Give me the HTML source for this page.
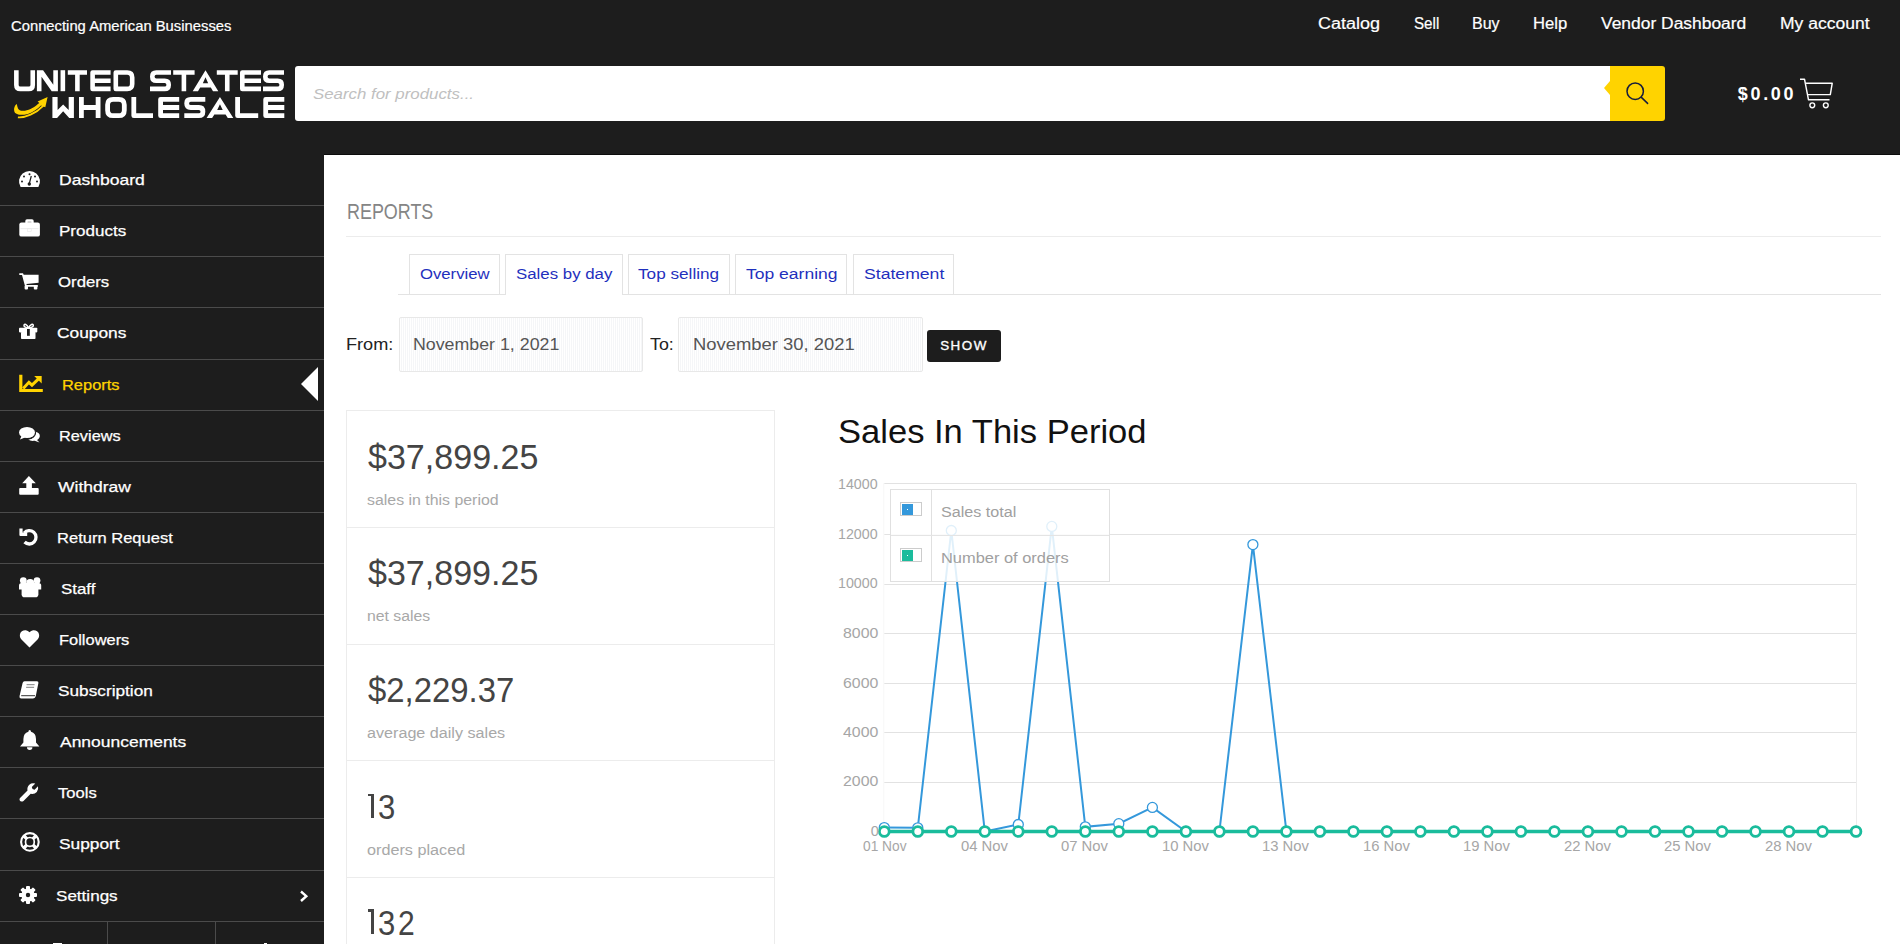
<!DOCTYPE html>
<html><head><meta charset="utf-8"><title>Reports</title>
<style>
html,body{margin:0;padding:0;width:1900px;height:944px;overflow:hidden;background:#fff;position:relative;font-family:"Liberation Sans",sans-serif}
.t{position:absolute;white-space:nowrap;line-height:1}
svg{position:absolute;overflow:visible}
</style></head><body>
<div style="position:absolute;left:0;top:0;width:1900px;height:155px;background:#1d1d1d"></div>
<div style="position:absolute;left:0;top:155px;width:324px;height:789px;background:#1d1d1d"></div>
<div style="position:absolute;left:324px;top:154px;width:1576px;height:1px;background:#0c0c0c"></div>
<div class="t" style="left:11.10px;top:18.50px;font-size:14px;color:#fff;font-weight:400;transform:scaleX(1.0568);transform-origin:0 0;-webkit-text-stroke:0.2px #fff;">Connecting American Businesses</div>
<div class="t" style="left:1318.20px;top:16.00px;font-size:16px;color:#fff;font-weight:400;transform:scaleX(1.1242);transform-origin:0 0;-webkit-text-stroke:0.2px #fff;">Catalog</div>
<div class="t" style="left:1413.70px;top:16.00px;font-size:16px;color:#fff;font-weight:400;transform:scaleX(0.9480);transform-origin:0 0;-webkit-text-stroke:0.2px #fff;">Sell</div>
<div class="t" style="left:1472.40px;top:16.00px;font-size:16px;color:#fff;font-weight:400;transform:scaleX(1.0012);transform-origin:0 0;-webkit-text-stroke:0.2px #fff;">Buy</div>
<div class="t" style="left:1533.40px;top:16.00px;font-size:16px;color:#fff;font-weight:400;transform:scaleX(1.0391);transform-origin:0 0;-webkit-text-stroke:0.2px #fff;">Help</div>
<div class="t" style="left:1601.00px;top:16.00px;font-size:16px;color:#fff;font-weight:400;transform:scaleX(1.0890);transform-origin:0 0;-webkit-text-stroke:0.2px #fff;">Vendor Dashboard</div>
<div class="t" style="left:1780.30px;top:16.00px;font-size:16px;color:#fff;font-weight:400;transform:scaleX(1.0940);transform-origin:0 0;-webkit-text-stroke:0.2px #fff;">My account</div>
<svg style="left:0;top:0" width="300" height="130" viewBox="0 0 300 130"><path d="M16.35,70.2 V84.9 Q16.35,88.9 20.35,88.9 H28.75 Q32.75,88.9 32.75,84.9 V70.2" stroke="#fff" stroke-width="4.6" fill="none" stroke-linejoin="round"/><path d="M36.9,91.2 V70.2 H43.1 L53.3,84.76 V70.2 H57.9 V91.2 H51.699999999999996 L41.5,76.64 V91.2 Z" fill="#fff" fill-rule="evenodd"/><path d="M62.85,70.2 V91.2" stroke="#fff" stroke-width="4.6" fill="none" stroke-linejoin="round"/><path d="M67.8,72.5 H87.0 M77.4,72.5 V91.2" stroke="#fff" stroke-width="4.6" fill="none" stroke-linejoin="round"/><path d="M110.6,72.5 H92.6 V88.9 H110.6 M92.6,80.7 H110.6" stroke="#fff" stroke-width="4.6" fill="none" stroke-linejoin="round"/><path d="M115.8,72.5 H127.19999999999999 Q132.2,72.5 132.2,77.5 V83.9 Q132.2,88.9 127.19999999999999,88.9 H115.8 Z" stroke="#fff" stroke-width="4.6" fill="none" stroke-linejoin="round"/><path d="M171.0,72.5 H156.3 Q152.3,72.5 152.3,76.5 V76.7 Q152.3,80.7 156.3,80.7 H164.7 Q168.7,80.7 168.7,84.7 V84.9 Q168.7,88.9 164.7,88.9 H150.0" stroke="#fff" stroke-width="4.6" fill="none" stroke-linejoin="round"/><path d="M173.2,72.5 H194.6 M183.89999999999998,72.5 V91.2" stroke="#fff" stroke-width="4.6" fill="none" stroke-linejoin="round"/><path d="M205.5,70.2 L218.3,91.2 H192.7 Z M205.5,77.33 L208.14600000000002,83.22 H202.85399999999998 Z M200.19038095238093,87.59 H210.80961904761907 L213.01000000000002,91.2 H197.98999999999998 Z" fill="#fff" fill-rule="evenodd"/><path d="M216.8,72.5 H237.7 M227.25,72.5 V91.2" stroke="#fff" stroke-width="4.6" fill="none" stroke-linejoin="round"/><path d="M261.0,72.5 H242.3 V88.9 H261.0 M242.3,80.7 H261.0" stroke="#fff" stroke-width="4.6" fill="none" stroke-linejoin="round"/><path d="M284.0,72.5 H269.3 Q265.3,72.5 265.3,76.5 V76.7 Q265.3,80.7 269.3,80.7 H277.7 Q281.7,80.7 281.7,84.7 V84.9 Q281.7,88.9 277.7,88.9 H263.0" stroke="#fff" stroke-width="4.6" fill="none" stroke-linejoin="round"/><path d="M52.4,96.9 H57.6 V110.04400000000001 L63.150000000000006,104.53200000000001 L68.7,110.04400000000001 V96.9 H73.9 V118.10000000000001 H69.22 L63.150000000000006,111.316 L57.08,118.10000000000001 H52.4 Z" fill="#fff" fill-rule="evenodd"/><path d="M81.4,96.9 V118.10000000000001 M98.1,96.9 V118.10000000000001 M81.4,107.5 H98.1" stroke="#fff" stroke-width="4.8" fill="none" stroke-linejoin="round"/><path d="M113.10000000000001,99.30000000000001 H118.8 Q124.3,99.30000000000001 124.3,104.80000000000001 V110.2 Q124.3,115.7 118.8,115.7 H113.10000000000001 Q107.60000000000001,115.7 107.60000000000001,110.2 V104.80000000000001 Q107.60000000000001,99.30000000000001 113.10000000000001,99.30000000000001 Z" stroke="#fff" stroke-width="4.8" fill="none" stroke-linejoin="round"/><path d="M133.8,96.9 V115.7 H153.0" stroke="#fff" stroke-width="4.8" fill="none" stroke-linejoin="round"/><path d="M179.2,99.30000000000001 H160.6 V115.7 H179.2 M160.6,107.5 H179.2" stroke="#fff" stroke-width="4.8" fill="none" stroke-linejoin="round"/><path d="M205.3,99.30000000000001 H190.70000000000002 Q186.70000000000002,99.30000000000001 186.70000000000002,103.30000000000001 V103.5 Q186.70000000000002,107.5 190.70000000000002,107.5 H198.9 Q202.9,107.5 202.9,111.5 V111.7 Q202.9,115.7 198.9,115.7 H184.3" stroke="#fff" stroke-width="4.8" fill="none" stroke-linejoin="round"/><path d="M219.95,96.9 L233.3,118.10000000000001 H206.6 Z M219.95,104.34 L222.707,110.04400000000001 H217.19299999999998 Z M214.3214905660377,114.60400000000001 H225.57850943396227 L227.78,118.10000000000001 H212.11999999999998 Z" fill="#fff" fill-rule="evenodd"/><path d="M237.6,96.9 V115.7 H258.2" stroke="#fff" stroke-width="4.8" fill="none" stroke-linejoin="round"/><path d="M284.3,99.30000000000001 H265.7 V115.7 H284.3 M265.7,107.5 H284.3" stroke="#fff" stroke-width="4.8" fill="none" stroke-linejoin="round"/></svg>
<svg style="left:10px;top:92px;" width="45" height="30" viewBox="0 0 45 30"><path d="M6.8,12 C4,13.5 2.8,19.5 6,21.6 C8.5,23.3 13,23 17.8,21.9 C23,20.5 27,17 31,13.4 L35.3,15.2 L37.6,5.1 L27.6,9.4 L29.3,11.1 C25,14.8 20,18.3 14.9,18.7 C11,19 9,18.5 8,16.5 C7.3,15 7.2,13.5 6.8,12 Z" fill="#ffd300"/><path d="M7.9,25.3 C15,26 26,21.5 33.4,13.6" stroke="#ffd300" stroke-width="1.8" fill="none"/></svg>
<div style="position:absolute;left:295px;top:66px;width:1320px;height:55px;background:#fff;border-radius:3px 0 0 3px"></div>
<div class="t" style="left:313.20px;top:86.25px;font-size:15.5px;color:#c0c0c0;font-weight:400;transform:scaleX(1.0865);transform-origin:0 0;font-style:italic;">Search for products...</div>
<div style="position:absolute;left:1610px;top:66px;width:55px;height:55px;background:#ffd300;border-radius:0 3px 3px 0"></div>
<div style="position:absolute;left:1603.8px;top:81px;width:0;height:0;border-top:7px solid transparent;border-bottom:7px solid transparent;border-right:6.4px solid #ffd300"></div>
<svg style="left:1620px;top:76px;" width="32" height="32" viewBox="0 0 32 32"><circle cx="15.2" cy="15.2" r="8.2" stroke="#161c3c" stroke-width="1.5" fill="none"/><path d="M21.4,21.4 L27.6,27.4" stroke="#161c3c" stroke-width="1.5" stroke-linecap="round"/></svg>
<div class="t" style="left:1737.80px;top:84.50px;font-size:18px;color:#fff;font-weight:700;letter-spacing:2.666px;">$0.00</div>
<svg style="left:1799px;top:77.6px;" width="36" height="33" viewBox="0 0 36 33"><path d="M1,1.2 L5.5,1.2 L9.5,21.8 L30.5,21.8" stroke="#fff" stroke-width="1.45" fill="none" stroke-linejoin="round"/><path d="M6.3,5.3 L33.2,5.3 L31.3,16.6 L8.3,16.6" stroke="#fff" stroke-width="1.45" fill="none" stroke-linejoin="round"/><circle cx="13.3" cy="27.3" r="2.4" stroke="#fff" stroke-width="1.4" fill="none"/><circle cx="26.8" cy="27.3" r="2.4" stroke="#fff" stroke-width="1.4" fill="none"/></svg>
<div style="position:absolute;left:0;top:205px;width:324px;height:1px;background:#4b4b4b"></div>
<div style="position:absolute;left:0;top:256px;width:324px;height:1px;background:#4b4b4b"></div>
<div style="position:absolute;left:0;top:307px;width:324px;height:1px;background:#4b4b4b"></div>
<div style="position:absolute;left:0;top:359px;width:324px;height:1px;background:#4b4b4b"></div>
<div style="position:absolute;left:0;top:410px;width:324px;height:1px;background:#4b4b4b"></div>
<div style="position:absolute;left:0;top:461px;width:324px;height:1px;background:#4b4b4b"></div>
<div style="position:absolute;left:0;top:512px;width:324px;height:1px;background:#4b4b4b"></div>
<div style="position:absolute;left:0;top:563px;width:324px;height:1px;background:#4b4b4b"></div>
<div style="position:absolute;left:0;top:614px;width:324px;height:1px;background:#4b4b4b"></div>
<div style="position:absolute;left:0;top:665px;width:324px;height:1px;background:#4b4b4b"></div>
<div style="position:absolute;left:0;top:716px;width:324px;height:1px;background:#4b4b4b"></div>
<div style="position:absolute;left:0;top:767px;width:324px;height:1px;background:#4b4b4b"></div>
<div style="position:absolute;left:0;top:818px;width:324px;height:1px;background:#4b4b4b"></div>
<div style="position:absolute;left:0;top:870px;width:324px;height:1px;background:#4b4b4b"></div>
<div style="position:absolute;left:0;top:921px;width:324px;height:1px;background:#4b4b4b"></div>
<div style="position:absolute;left:107px;top:922px;width:1px;height:22px;background:#4b4b4b"></div>
<div style="position:absolute;left:215px;top:922px;width:1px;height:22px;background:#4b4b4b"></div>
<div class="t" style="left:59.00px;top:172.40px;font-size:15.2px;color:#fff;font-weight:400;transform:scaleX(1.1552);transform-origin:0 0;-webkit-text-stroke:0.25px #fff;">Dashboard</div>
<div class="t" style="left:59.00px;top:223.40px;font-size:15.2px;color:#fff;font-weight:400;transform:scaleX(1.1221);transform-origin:0 0;-webkit-text-stroke:0.25px #fff;">Products</div>
<div class="t" style="left:58.00px;top:274.40px;font-size:15.2px;color:#fff;font-weight:400;transform:scaleX(1.1044);transform-origin:0 0;-webkit-text-stroke:0.25px #fff;">Orders</div>
<div class="t" style="left:56.80px;top:325.40px;font-size:15.2px;color:#fff;font-weight:400;transform:scaleX(1.1422);transform-origin:0 0;-webkit-text-stroke:0.25px #fff;">Coupons</div>
<div class="t" style="left:62.40px;top:377.40px;font-size:15.2px;color:#ffd300;font-weight:400;transform:scaleX(1.0824);transform-origin:0 0;-webkit-text-stroke:0.25px #ffd300;">Reports</div>
<div class="t" style="left:59.00px;top:428.40px;font-size:15.2px;color:#fff;font-weight:400;transform:scaleX(1.0741);transform-origin:0 0;-webkit-text-stroke:0.25px #fff;">Reviews</div>
<div class="t" style="left:58.30px;top:479.40px;font-size:15.2px;color:#fff;font-weight:400;transform:scaleX(1.1533);transform-origin:0 0;-webkit-text-stroke:0.25px #fff;">Withdraw</div>
<div class="t" style="left:56.80px;top:530.40px;font-size:15.2px;color:#fff;font-weight:400;transform:scaleX(1.0887);transform-origin:0 0;-webkit-text-stroke:0.25px #fff;">Return Request</div>
<div class="t" style="left:60.80px;top:581.40px;font-size:15.2px;color:#fff;font-weight:400;transform:scaleX(1.1121);transform-origin:0 0;-webkit-text-stroke:0.25px #fff;">Staff</div>
<div class="t" style="left:59.30px;top:632.40px;font-size:15.2px;color:#fff;font-weight:400;transform:scaleX(1.0824);transform-origin:0 0;-webkit-text-stroke:0.25px #fff;">Followers</div>
<div class="t" style="left:58.30px;top:683.40px;font-size:15.2px;color:#fff;font-weight:400;transform:scaleX(1.1345);transform-origin:0 0;-webkit-text-stroke:0.25px #fff;">Subscription</div>
<div class="t" style="left:59.70px;top:734.40px;font-size:15.2px;color:#fff;font-weight:400;transform:scaleX(1.1497);transform-origin:0 0;-webkit-text-stroke:0.25px #fff;">Announcements</div>
<div class="t" style="left:58.30px;top:785.40px;font-size:15.2px;color:#fff;font-weight:400;transform:scaleX(1.0909);transform-origin:0 0;-webkit-text-stroke:0.25px #fff;">Tools</div>
<div class="t" style="left:59.30px;top:836.40px;font-size:15.2px;color:#fff;font-weight:400;transform:scaleX(1.1403);transform-origin:0 0;-webkit-text-stroke:0.25px #fff;">Support</div>
<div class="t" style="left:56.40px;top:888.40px;font-size:15.2px;color:#fff;font-weight:400;transform:scaleX(1.1235);transform-origin:0 0;-webkit-text-stroke:0.25px #fff;">Settings</div>
<svg style="left:18.5px;top:171px;" width="21" height="16" viewBox="0 0 21 16"><path d="M1.6,16 A10.5,10.5 0 1 1 19.4,16 Z" fill="#fff"/><circle cx="10.5" cy="3.2" r="1" fill="#1d1d1d"/><circle cx="5" cy="5.5" r="1" fill="#1d1d1d"/><circle cx="16" cy="5.5" r="1" fill="#1d1d1d"/><circle cx="3" cy="10.5" r="1" fill="#1d1d1d"/><circle cx="18" cy="10.5" r="1" fill="#1d1d1d"/><path d="M10.3,12.5 L12.3,5" stroke="#1d1d1d" stroke-width="1.2"/><circle cx="10.3" cy="13" r="1.7" fill="#1d1d1d"/></svg>
<svg style="left:18.5px;top:219px;" width="21" height="18" viewBox="0 0 21 18"><path d="M6.3,5 V2 Q6.3,0.3 8,0.3 H13 Q14.7,0.3 14.7,2 V5 Z" fill="#fff"/><rect x="0.3" y="3.4" width="20.6" height="14.2" rx="2.2" fill="#fff"/><rect x="8.5" y="2.2" width="4" height="1.6" rx="0.5" fill="#ccc"/><rect x="1.5" y="9.5" width="18" height="0.6" fill="#ddd"/><rect x="8.6" y="9.8" width="3.6" height="2.6" fill="none" stroke="#e4e4e4" stroke-width="0.5"/></svg>
<svg style="left:18.5px;top:272.5px;" width="20" height="17" viewBox="0 0 20 17"><path d="M0.3,0.2 H4 L4.7,1.7 H19.6 V9.7 L7.4,10.9 L7.7,12.1 H18.8 V13.8 H6.2 L3,2.1 H0.3 Z" fill="#fff"/><rect x="5.6" y="12.6" width="3.4" height="3.9" rx="1" fill="#fff"/><rect x="14.8" y="12.6" width="3.6" height="3.9" rx="1" fill="#fff"/></svg>
<svg style="left:18.5px;top:323px;" width="19" height="16" viewBox="0 0 19 16"><path d="M9.6,5 C8,1 5,0.3 5,2.6 C5,4.2 7.5,4.8 9.6,5 C11.7,4.8 14.3,4.2 14.3,2.6 C14.3,0.3 11.2,1 9.6,5 Z" stroke="#fff" stroke-width="1.5" fill="none"/><rect x="0" y="4.8" width="18.3" height="4.6" rx="0.8" fill="#fff"/><rect x="2" y="9" width="14.5" height="7" rx="0.8" fill="#fff"/><rect x="8" y="6" width="2.8" height="6.8" fill="#1d1d1d"/></svg>
<svg style="left:18.5px;top:375px;" width="24" height="18" viewBox="0 0 24 18"><path d="M0.2,-0.2 H3.4 V14 H23.8 V17.1 H0.2 Z" fill="#ffd300"/><path d="M4.2,13.4 L9.9,7.3 L13,10.2 L19.8,3.6" stroke="#ffd300" stroke-width="3" fill="none" stroke-linejoin="miter"/><path d="M15.2,0.9 H22.7 V8.4 Z" fill="#ffd300"/></svg>
<svg style="left:18.5px;top:427px;" width="21" height="16" viewBox="0 0 21 16"><ellipse cx="8" cy="5.5" rx="8" ry="5.5" fill="#fff"/><path d="M2.5,9 L1,12.5 L6,10.5 Z" fill="#fff"/><path d="M9,12.5 A7,4.8 0 0 0 20.8,9.5 A6,4.5 0 0 0 16.5,4.8 A8.5,6.5 0 0 1 9,12.5 Z" fill="#fff"/><path d="M17.5,12.5 L20.5,15.5 L15,13.5 Z" fill="#fff"/><path d="M8.8,12.2 A8.6,6.3 0 0 0 16.6,5" stroke="#1d1d1d" stroke-width="1" fill="none"/></svg>
<svg style="left:18.5px;top:475.5px;" width="20" height="19" viewBox="0 0 20 19"><path d="M9.9,0 L16.8,7.2 H12.9 V12.5 H7.3 V7.2 H3.2 Z" fill="#fff"/><rect x="0.2" y="11.9" width="19.5" height="6.8" rx="1" fill="#fff"/></svg>
<svg style="left:18.5px;top:527.5px;" width="19" height="18" viewBox="0 0 19 18"><path d="M5.17,4.99 A6.7,6.7 0 1 1 5.56,14.04" stroke="#fff" stroke-width="3.3" fill="none"/><path d="M0.4,0.6 H3.6 V4.6 H8.2 V8 H1.4 Q0.4,8 0.4,7 Z" fill="#fff"/></svg>
<svg style="left:18.5px;top:576.8px;" width="23" height="21" viewBox="0 0 23 21"><circle cx="4.3" cy="3.6" r="3.4" fill="#fff"/><circle cx="18" cy="3.6" r="3.4" fill="#fff"/><circle cx="11.2" cy="6" r="4" fill="#fff"/><path d="M0,8.5 Q0,6 2.5,6 H19.7 Q22.2,6 22.2,8.5 V12.5 H0 Z" fill="#fff"/><path d="M2.6,11 H19.4 V17.2 Q19.4,20.3 16.3,20.3 H5.7 Q2.6,20.3 2.6,17.2 Z" fill="#fff"/></svg>
<svg style="left:18.5px;top:629.5px;" width="21" height="18" viewBox="0 0 21 18"><path d="M10.5,17.5 L2,9 A5.3,5.3 0 0 1 10.5,2.2 A5.3,5.3 0 0 1 19,9 Z" fill="#fff"/></svg>
<svg style="left:18.5px;top:680.5px;" width="20" height="18" viewBox="0 0 20 18"><path d="M5.5,0.3 H18 Q19.7,0.3 19.4,1.9 L16.9,14.6 Q16.4,17.5 13.8,17.5 H2.2 Q0.2,17.5 0.5,15.3 L3.6,2 Q4,0.3 5.5,0.3 Z" fill="#fff"/><path d="M2.2,14.7 H16" stroke="#1d1d1d" stroke-width="0.9"/><path d="M7.6,3.7 H15.6 M7.1,6.3 H15.1" stroke="#1d1d1d" stroke-width="0.8" opacity="0.7"/></svg>
<svg style="left:19.5px;top:730px;" width="20" height="20" viewBox="0 0 20 20"><path d="M9.7,0 Q11,0 11,1.7 Q16,3 16,9 V12.5 L19.4,16.5 H0 L3.4,12.5 V9 Q3.4,3 8.4,1.7 Q8.4,0 9.7,0 Z" fill="#fff"/><path d="M7,17.2 H12.4 A2.7,2.7 0 0 1 7,17.2 Z" fill="#fff"/></svg>
<svg style="left:19px;top:782.5px;" width="19.5" height="19" viewBox="0 0 19.5 19"><path d="M2.5,18.5 Q0.5,18.5 0.5,16.5 Q0.5,15.6 1.3,14.8 L8.5,7.6 Q7.8,4 10.3,1.7 Q12.8,-0.4 16.3,0.6 L12.8,4 L13.5,6 L15.5,6.7 L19,3.3 Q19.8,6.6 17.8,9 Q15.4,11.5 11.7,10.8 L4.5,18 Q3.6,18.5 2.5,18.5 Z" fill="#fff"/></svg>
<svg style="left:19.5px;top:832px;" width="20" height="20" viewBox="0 0 20 20"><circle cx="9.9" cy="9.9" r="8.8" stroke="#fff" stroke-width="2.1" fill="none"/><circle cx="9.9" cy="9.9" r="4.4" stroke="#fff" stroke-width="1.7" fill="none"/><path d="M3.8,3.8 L6.9,6.9 M16,3.8 L12.9,6.9 M3.8,16 L6.9,12.9 M16,16 L12.9,12.9" stroke="#fff" stroke-width="3.4"/></svg>
<svg style="left:18.8px;top:885.5px;" width="18" height="18" viewBox="0 0 18 18"><rect x="7" y="0" width="4" height="18" rx="1" fill="#fff" transform="rotate(0 9 9)"/><rect x="7" y="0" width="4" height="18" rx="1" fill="#fff" transform="rotate(45 9 9)"/><rect x="7" y="0" width="4" height="18" rx="1" fill="#fff" transform="rotate(90 9 9)"/><rect x="7" y="0" width="4" height="18" rx="1" fill="#fff" transform="rotate(135 9 9)"/><circle cx="9" cy="9" r="6.6" fill="#fff"/><circle cx="9" cy="9" r="2.2" fill="#1d1d1d"/></svg>
<svg style="left:298.5px;top:890px;" width="10" height="12.5" viewBox="0 0 10 12.5"><path d="M2,1.5 L7.3,6.2 L2,11" stroke="#fff" stroke-width="2.4" fill="none"/></svg>
<div style="position:absolute;left:300.7px;top:366.7px;width:0;height:0;border-top:17.6px solid transparent;border-bottom:17.6px solid transparent;border-right:17.6px solid #fff"></div>
<div style="position:absolute;left:53px;top:942.5px;width:8.5px;height:1.5px;background:#fff"></div>
<div style="position:absolute;left:264px;top:942.5px;width:2.5px;height:1.5px;background:#fff"></div>
<div class="t" style="left:346.60px;top:200.75px;font-size:22.5px;color:#858585;font-weight:400;transform:scaleX(0.7964);transform-origin:0 0;">REPORTS</div>
<div style="position:absolute;left:346px;top:236px;width:1535px;height:1px;background:#ececec"></div>
<div style="position:absolute;left:398px;top:294px;width:1483px;height:1px;background:#e3e3e3"></div>
<div style="position:absolute;left:408.8px;top:254px;width:91.2px;height:40px;border:1px solid #e3e3e3;border-bottom:none;background:#fff;box-sizing:border-box"></div>
<div class="t" style="left:420.00px;top:266.25px;font-size:15.5px;color:#1f30bd;font-weight:400;transform:scaleX(1.0768);transform-origin:0 0;">Overview</div>
<div style="position:absolute;left:504.9px;top:254px;width:118.2px;height:41px;border:1px solid #e3e3e3;border-bottom:none;background:#fff;box-sizing:border-box"></div>
<div class="t" style="left:515.70px;top:266.25px;font-size:15.5px;color:#1f30bd;font-weight:400;transform:scaleX(1.0862);transform-origin:0 0;">Sales by day</div>
<div style="position:absolute;left:627.8px;top:254px;width:102.3px;height:40px;border:1px solid #e3e3e3;border-bottom:none;background:#fff;box-sizing:border-box"></div>
<div class="t" style="left:638.40px;top:266.25px;font-size:15.5px;color:#1f30bd;font-weight:400;transform:scaleX(1.1074);transform-origin:0 0;">Top selling</div>
<div style="position:absolute;left:735.0px;top:254px;width:112.1px;height:40px;border:1px solid #e3e3e3;border-bottom:none;background:#fff;box-sizing:border-box"></div>
<div class="t" style="left:745.80px;top:266.25px;font-size:15.5px;color:#1f30bd;font-weight:400;transform:scaleX(1.1296);transform-origin:0 0;">Top earning</div>
<div style="position:absolute;left:852.9px;top:254px;width:101.4px;height:40px;border:1px solid #e3e3e3;border-bottom:none;background:#fff;box-sizing:border-box"></div>
<div class="t" style="left:863.50px;top:266.25px;font-size:15.5px;color:#1f30bd;font-weight:400;transform:scaleX(1.1366);transform-origin:0 0;">Statement</div>
<div class="t" style="left:346.30px;top:335.90px;font-size:17.2px;color:#222;font-weight:400;transform:scaleX(1.0555);transform-origin:0 0;">From:</div>
<div style="position:absolute;left:399px;top:317px;width:244px;height:55px;background:repeating-linear-gradient(90deg,#fff 0 1px,#f5f6f8 1px 2px);border:1px solid #e8e8e8;box-sizing:border-box;border-radius:2px"></div>
<div class="t" style="left:413.40px;top:335.90px;font-size:17.2px;color:#555;font-weight:400;transform:scaleX(1.0346);transform-origin:0 0;">November 1, 2021</div>
<div class="t" style="left:649.70px;top:335.90px;font-size:17.2px;color:#222;font-weight:400;transform:scaleX(1.0373);transform-origin:0 0;">To:</div>
<div style="position:absolute;left:678px;top:317px;width:245px;height:55px;background:repeating-linear-gradient(90deg,#fff 0 1px,#f5f6f8 1px 2px);border:1px solid #e8e8e8;box-sizing:border-box;border-radius:2px"></div>
<div class="t" style="left:693.00px;top:335.90px;font-size:17.2px;color:#555;font-weight:400;transform:scaleX(1.0710);transform-origin:0 0;">November 30, 2021</div>
<div style="position:absolute;left:927px;top:330px;width:74px;height:32px;background:#1d1d1d;border-radius:3px"></div>
<div class="t" style="left:940.20px;top:339.30px;font-size:13.4px;color:#fff;font-weight:400;letter-spacing:1.504px;-webkit-text-stroke:0.35px #fff;">SHOW</div>
<div style="position:absolute;left:346px;top:410px;width:429px;height:600px;border:1px solid #ececec;box-sizing:border-box"></div>
<div style="position:absolute;left:346px;top:527px;width:429px;height:1px;background:#ececec"></div>
<div style="position:absolute;left:346px;top:644px;width:429px;height:1px;background:#ececec"></div>
<div style="position:absolute;left:346px;top:760px;width:429px;height:1px;background:#ececec"></div>
<div style="position:absolute;left:346px;top:877px;width:429px;height:1px;background:#ececec"></div>
<div class="t" style="left:368.00px;top:438.50px;font-size:35px;color:#444;font-weight:400;transform:scaleX(0.9727);transform-origin:0 0;">$37,899.25</div>
<div class="t" style="left:366.80px;top:492.25px;font-size:15.5px;color:#a8a8a8;font-weight:400;transform:scaleX(1.0252);transform-origin:0 0;">sales in this period</div>
<div class="t" style="left:368.00px;top:554.50px;font-size:35px;color:#444;font-weight:400;transform:scaleX(0.9722);transform-origin:0 0;">$37,899.25</div>
<div class="t" style="left:366.80px;top:608.25px;font-size:15.5px;color:#a8a8a8;font-weight:400;transform:scaleX(1.0188);transform-origin:0 0;">net sales</div>
<div class="t" style="left:368.00px;top:671.50px;font-size:35px;color:#444;font-weight:400;transform:scaleX(0.9395);transform-origin:0 0;">$2,229.37</div>
<div class="t" style="left:366.80px;top:725.25px;font-size:15.5px;color:#a8a8a8;font-weight:400;transform:scaleX(1.0415);transform-origin:0 0;">average daily sales</div>
<div style="position:absolute;left:371.4px;top:793.6px;width:2.7px;height:24.4px;background:#444"></div>
<div style="position:absolute;left:367.6px;top:793.6px;width:5px;height:2.6px;background:#444"></div>
<div class="t" style="left:378.00px;top:788.50px;font-size:35px;color:#444;font-weight:400;transform:scaleX(0.8890);transform-origin:0 0;">3</div>
<div class="t" style="left:367.00px;top:842.25px;font-size:15.5px;color:#a8a8a8;font-weight:400;transform:scaleX(1.0456);transform-origin:0 0;">orders placed</div>
<div style="position:absolute;left:371.4px;top:909.2px;width:2.7px;height:24.4px;background:#444"></div>
<div style="position:absolute;left:367.6px;top:909.2px;width:5px;height:2.6px;background:#444"></div>
<div class="t" style="left:378.00px;top:904.50px;font-size:35px;color:#444;font-weight:400;transform:scaleX(0.8890);transform-origin:0 0;">3</div>
<div class="t" style="left:397.50px;top:904.50px;font-size:35px;color:#444;font-weight:400;transform:scaleX(0.8582);transform-origin:0 0;">2</div>
<div class="t" style="left:838.30px;top:415.25px;font-size:33.5px;color:#111;font-weight:400;transform:scaleX(1.0311);transform-origin:0 0;">Sales In This Period</div>
<svg style="left:0;top:0" width="1900" height="944" viewBox="0 0 1900 944"><path d="M884.3,831.5 H1856.0" stroke="#e2e2e2" stroke-width="1"/><path d="M884.3,782.5 H1856.0" stroke="#e2e2e2" stroke-width="1"/><path d="M884.3,732.5 H1856.0" stroke="#e2e2e2" stroke-width="1"/><path d="M884.3,683.5 H1856.0" stroke="#e2e2e2" stroke-width="1"/><path d="M884.3,633.5 H1856.0" stroke="#e2e2e2" stroke-width="1"/><path d="M884.3,584.5 H1856.0" stroke="#e2e2e2" stroke-width="1"/><path d="M884.3,534.5 H1856.0" stroke="#e2e2e2" stroke-width="1"/><path d="M884.3,483.5 H1856.0" stroke="#e2e2e2" stroke-width="1"/><path d="M1856.5,483.5 V831.5" stroke="#ececec" stroke-width="1"/><path d="M883.8,483.5 V831.5" stroke="#eeeeee" stroke-width="1" stroke-dasharray="1 1"/><path d="M884.3,827.6 L917.8,827.8 L951.3,530.5 L984.8,831.5 L1018.3,824.5 L1051.8,526.4 L1085.3,826.8 L1118.8,823.7 L1152.4,807.4 L1185.9,831.5 L1219.4,831.5 L1252.9,544.6 L1286.4,831.5 L1319.9,831.5 L1353.4,831.5 L1386.9,831.5 L1420.4,831.5 L1453.9,831.5 L1487.4,831.5 L1520.9,831.5 L1554.4,831.5 L1587.9,831.5 L1621.5,831.5 L1655.0,831.5 L1688.5,831.5 L1722.0,831.5 L1755.5,831.5 L1789.0,831.5 L1822.5,831.5 L1856.0,831.5" stroke="#3498db" stroke-width="2" fill="none" stroke-linejoin="miter"/><circle cx="884.3" cy="827.6" r="5" stroke="#3498db" stroke-width="1.3" fill="#fff"/><circle cx="917.8" cy="827.8" r="5" stroke="#3498db" stroke-width="1.3" fill="#fff"/><circle cx="951.3" cy="530.5" r="5" stroke="#3498db" stroke-width="1.3" fill="#fff"/><circle cx="984.8" cy="831.5" r="5" stroke="#3498db" stroke-width="1.3" fill="#fff"/><circle cx="1018.3" cy="824.5" r="5" stroke="#3498db" stroke-width="1.3" fill="#fff"/><circle cx="1051.8" cy="526.4" r="5" stroke="#3498db" stroke-width="1.3" fill="#fff"/><circle cx="1085.3" cy="826.8" r="5" stroke="#3498db" stroke-width="1.3" fill="#fff"/><circle cx="1118.8" cy="823.7" r="5" stroke="#3498db" stroke-width="1.3" fill="#fff"/><circle cx="1152.4" cy="807.4" r="5" stroke="#3498db" stroke-width="1.3" fill="#fff"/><circle cx="1185.9" cy="831.5" r="5" stroke="#3498db" stroke-width="1.3" fill="#fff"/><circle cx="1219.4" cy="831.5" r="5" stroke="#3498db" stroke-width="1.3" fill="#fff"/><circle cx="1252.9" cy="544.6" r="5" stroke="#3498db" stroke-width="1.3" fill="#fff"/><circle cx="1286.4" cy="831.5" r="5" stroke="#3498db" stroke-width="1.3" fill="#fff"/><circle cx="1319.9" cy="831.5" r="5" stroke="#3498db" stroke-width="1.3" fill="#fff"/><circle cx="1353.4" cy="831.5" r="5" stroke="#3498db" stroke-width="1.3" fill="#fff"/><circle cx="1386.9" cy="831.5" r="5" stroke="#3498db" stroke-width="1.3" fill="#fff"/><circle cx="1420.4" cy="831.5" r="5" stroke="#3498db" stroke-width="1.3" fill="#fff"/><circle cx="1453.9" cy="831.5" r="5" stroke="#3498db" stroke-width="1.3" fill="#fff"/><circle cx="1487.4" cy="831.5" r="5" stroke="#3498db" stroke-width="1.3" fill="#fff"/><circle cx="1520.9" cy="831.5" r="5" stroke="#3498db" stroke-width="1.3" fill="#fff"/><circle cx="1554.4" cy="831.5" r="5" stroke="#3498db" stroke-width="1.3" fill="#fff"/><circle cx="1587.9" cy="831.5" r="5" stroke="#3498db" stroke-width="1.3" fill="#fff"/><circle cx="1621.5" cy="831.5" r="5" stroke="#3498db" stroke-width="1.3" fill="#fff"/><circle cx="1655.0" cy="831.5" r="5" stroke="#3498db" stroke-width="1.3" fill="#fff"/><circle cx="1688.5" cy="831.5" r="5" stroke="#3498db" stroke-width="1.3" fill="#fff"/><circle cx="1722.0" cy="831.5" r="5" stroke="#3498db" stroke-width="1.3" fill="#fff"/><circle cx="1755.5" cy="831.5" r="5" stroke="#3498db" stroke-width="1.3" fill="#fff"/><circle cx="1789.0" cy="831.5" r="5" stroke="#3498db" stroke-width="1.3" fill="#fff"/><circle cx="1822.5" cy="831.5" r="5" stroke="#3498db" stroke-width="1.3" fill="#fff"/><circle cx="1856.0" cy="831.5" r="5" stroke="#3498db" stroke-width="1.3" fill="#fff"/><path d="M884.3,831.5 H1856.0" stroke="#1abc9c" stroke-width="3.3"/><circle cx="884.3" cy="831.5" r="4.9" stroke="#1abc9c" stroke-width="2.8" fill="#fff"/><circle cx="917.8" cy="831.5" r="4.9" stroke="#1abc9c" stroke-width="2.8" fill="#fff"/><circle cx="951.3" cy="831.5" r="4.9" stroke="#1abc9c" stroke-width="2.8" fill="#fff"/><circle cx="984.8" cy="831.5" r="4.9" stroke="#1abc9c" stroke-width="2.8" fill="#fff"/><circle cx="1018.3" cy="831.5" r="4.9" stroke="#1abc9c" stroke-width="2.8" fill="#fff"/><circle cx="1051.8" cy="831.5" r="4.9" stroke="#1abc9c" stroke-width="2.8" fill="#fff"/><circle cx="1085.3" cy="831.5" r="4.9" stroke="#1abc9c" stroke-width="2.8" fill="#fff"/><circle cx="1118.8" cy="831.5" r="4.9" stroke="#1abc9c" stroke-width="2.8" fill="#fff"/><circle cx="1152.4" cy="831.5" r="4.9" stroke="#1abc9c" stroke-width="2.8" fill="#fff"/><circle cx="1185.9" cy="831.5" r="4.9" stroke="#1abc9c" stroke-width="2.8" fill="#fff"/><circle cx="1219.4" cy="831.5" r="4.9" stroke="#1abc9c" stroke-width="2.8" fill="#fff"/><circle cx="1252.9" cy="831.5" r="4.9" stroke="#1abc9c" stroke-width="2.8" fill="#fff"/><circle cx="1286.4" cy="831.5" r="4.9" stroke="#1abc9c" stroke-width="2.8" fill="#fff"/><circle cx="1319.9" cy="831.5" r="4.9" stroke="#1abc9c" stroke-width="2.8" fill="#fff"/><circle cx="1353.4" cy="831.5" r="4.9" stroke="#1abc9c" stroke-width="2.8" fill="#fff"/><circle cx="1386.9" cy="831.5" r="4.9" stroke="#1abc9c" stroke-width="2.8" fill="#fff"/><circle cx="1420.4" cy="831.5" r="4.9" stroke="#1abc9c" stroke-width="2.8" fill="#fff"/><circle cx="1453.9" cy="831.5" r="4.9" stroke="#1abc9c" stroke-width="2.8" fill="#fff"/><circle cx="1487.4" cy="831.5" r="4.9" stroke="#1abc9c" stroke-width="2.8" fill="#fff"/><circle cx="1520.9" cy="831.5" r="4.9" stroke="#1abc9c" stroke-width="2.8" fill="#fff"/><circle cx="1554.4" cy="831.5" r="4.9" stroke="#1abc9c" stroke-width="2.8" fill="#fff"/><circle cx="1587.9" cy="831.5" r="4.9" stroke="#1abc9c" stroke-width="2.8" fill="#fff"/><circle cx="1621.5" cy="831.5" r="4.9" stroke="#1abc9c" stroke-width="2.8" fill="#fff"/><circle cx="1655.0" cy="831.5" r="4.9" stroke="#1abc9c" stroke-width="2.8" fill="#fff"/><circle cx="1688.5" cy="831.5" r="4.9" stroke="#1abc9c" stroke-width="2.8" fill="#fff"/><circle cx="1722.0" cy="831.5" r="4.9" stroke="#1abc9c" stroke-width="2.8" fill="#fff"/><circle cx="1755.5" cy="831.5" r="4.9" stroke="#1abc9c" stroke-width="2.8" fill="#fff"/><circle cx="1789.0" cy="831.5" r="4.9" stroke="#1abc9c" stroke-width="2.8" fill="#fff"/><circle cx="1822.5" cy="831.5" r="4.9" stroke="#1abc9c" stroke-width="2.8" fill="#fff"/><circle cx="1856.0" cy="831.5" r="4.9" stroke="#1abc9c" stroke-width="2.8" fill="#fff"/></svg><div style="position:absolute;left:890px;top:489px;width:220px;height:93px;background:rgba(255,255,255,0.85);border:1px solid #e0e0e0;box-sizing:border-box"></div><div style="position:absolute;left:931px;top:490px;width:1px;height:91px;background:#e0e0e0"></div><div style="position:absolute;left:891px;top:535px;width:218px;height:1px;background:#e4e4e4"></div><div style="position:absolute;left:900px;top:502.4px;width:22px;height:14px;border:1px solid #ccc;box-sizing:border-box"></div><div style="position:absolute;left:902px;top:504.0px;width:11px;height:11px;background:#3498db"></div><div style="position:absolute;left:907px;top:509.0px;width:1px;height:1px;background:#fff"></div><div style="position:absolute;left:900px;top:548.4px;width:22px;height:14px;border:1px solid #ccc;box-sizing:border-box"></div><div style="position:absolute;left:902px;top:550.0px;width:11px;height:11px;background:#1abc9c"></div><div style="position:absolute;left:907px;top:555.0px;width:1px;height:1px;background:#fff"></div>
<div class="t" style="left:870.70px;top:824.25px;font-size:14.5px;color:#a6a6a6;font-weight:400;">0</div>
<div class="t" style="left:842.60px;top:774.25px;font-size:14.5px;color:#a6a6a6;font-weight:400;transform:scaleX(1.0941);transform-origin:0 0;">2000</div>
<div class="t" style="left:842.60px;top:725.25px;font-size:14.5px;color:#a6a6a6;font-weight:400;transform:scaleX(1.0941);transform-origin:0 0;">4000</div>
<div class="t" style="left:842.60px;top:676.25px;font-size:14.5px;color:#a6a6a6;font-weight:400;transform:scaleX(1.0941);transform-origin:0 0;">6000</div>
<div class="t" style="left:842.60px;top:626.25px;font-size:14.5px;color:#a6a6a6;font-weight:400;transform:scaleX(1.0941);transform-origin:0 0;">8000</div>
<div class="t" style="left:838.30px;top:576.25px;font-size:14.5px;color:#a6a6a6;font-weight:400;transform:scaleX(0.9820);transform-origin:0 0;">10000</div>
<div class="t" style="left:838.30px;top:527.25px;font-size:14.5px;color:#a6a6a6;font-weight:400;transform:scaleX(0.9820);transform-origin:0 0;">12000</div>
<div class="t" style="left:838.30px;top:477.25px;font-size:14.5px;color:#a6a6a6;font-weight:400;transform:scaleX(0.9820);transform-origin:0 0;">14000</div>
<div class="t" style="left:862.90px;top:839.25px;font-size:14.5px;color:#a6a6a6;font-weight:400;transform:scaleX(0.9470);transform-origin:0 0;">01 Nov</div>
<div class="t" style="left:960.67px;top:839.25px;font-size:14.5px;color:#a6a6a6;font-weight:400;transform:scaleX(1.0232);transform-origin:0 0;">04 Nov</div>
<div class="t" style="left:1061.19px;top:839.25px;font-size:14.5px;color:#a6a6a6;font-weight:400;transform:scaleX(1.0232);transform-origin:0 0;">07 Nov</div>
<div class="t" style="left:1161.71px;top:839.25px;font-size:14.5px;color:#a6a6a6;font-weight:400;transform:scaleX(1.0232);transform-origin:0 0;">10 Nov</div>
<div class="t" style="left:1262.23px;top:839.25px;font-size:14.5px;color:#a6a6a6;font-weight:400;transform:scaleX(1.0232);transform-origin:0 0;">13 Nov</div>
<div class="t" style="left:1362.75px;top:839.25px;font-size:14.5px;color:#a6a6a6;font-weight:400;transform:scaleX(1.0232);transform-origin:0 0;">16 Nov</div>
<div class="t" style="left:1463.27px;top:839.25px;font-size:14.5px;color:#a6a6a6;font-weight:400;transform:scaleX(1.0232);transform-origin:0 0;">19 Nov</div>
<div class="t" style="left:1563.79px;top:839.25px;font-size:14.5px;color:#a6a6a6;font-weight:400;transform:scaleX(1.0232);transform-origin:0 0;">22 Nov</div>
<div class="t" style="left:1664.32px;top:839.25px;font-size:14.5px;color:#a6a6a6;font-weight:400;transform:scaleX(1.0232);transform-origin:0 0;">25 Nov</div>
<div class="t" style="left:1764.84px;top:839.25px;font-size:14.5px;color:#a6a6a6;font-weight:400;transform:scaleX(1.0232);transform-origin:0 0;">28 Nov</div>
<div class="t" style="left:941.20px;top:504.35px;font-size:15.3px;color:#a0a0a0;font-weight:400;transform:scaleX(1.0555);transform-origin:0 0;">Sales total</div>
<div class="t" style="left:940.70px;top:550.35px;font-size:15.3px;color:#a0a0a0;font-weight:400;transform:scaleX(1.0735);transform-origin:0 0;">Number of orders</div>
</body></html>
